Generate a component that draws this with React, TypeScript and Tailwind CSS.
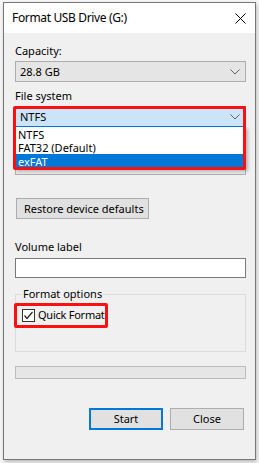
import React from "react";

const Chevron = () => (
  <svg width="10" height="6" viewBox="0 0 10 6" className="shrink-0">
    <path d="M0.5 0.5 L5 5 L9.5 0.5" fill="none" stroke="#606060" strokeWidth="1" />
  </svg>
);

const Combo = ({ text }: { text: string }) => (
  <div className="h-[21px] w-[231px] border border-[#adadad] bg-[#e5e5e5] flex items-center justify-between pl-[4px] pr-[5px] leading-[16px]">
    <span>{text}</span>
    <Chevron />
  </div>
);

export default function App() {
  return (
    <div
      className="w-[259px] h-[463px] bg-[#f7f7f7] pl-[3px] pt-[2px] text-[11px] text-black"
      style={{ fontFamily: '"Noto Sans", "Liberation Sans", sans-serif' }}
    >
      <div className="w-[253px] h-[458px] border border-[#777777] bg-[#f0f0f0] shadow-[1px_2px_4px_rgba(0,0,0,0.25)] flex flex-col">
        {/* Title bar */}
        <div className="h-[30px] bg-white flex items-center justify-between pl-[8px] pr-[9px] shrink-0">
          <span className="text-[12px] leading-[16px] tracking-[-0.35px]">Format USB Drive (G:)</span>
          <svg width="11" height="11" viewBox="0 0 11 11">
            <path d="M0.5 0.5 L10.5 10.5 M10.5 0.5 L0.5 10.5" stroke="#000" strokeWidth="1" />
          </svg>
        </div>

        <div className="pl-[11px] flex flex-col leading-[16px]">
          <div className="mt-[10px]">Capacity:</div>
          <div className="mt-[2px]">
            <Combo text="28.8 GB" />
          </div>

          <div className="mt-[6px]">File system</div>
          <div className="relative mt-[2px]">
            <div className="h-[21px] w-[231px] border border-[#0078d7] bg-[#cce4f7] flex items-center justify-between pl-[4px] pr-[5px]">
              <span>NTFS</span>
              <Chevron />
            </div>
            <div className="mt-[9px] h-[16px]" />
            <div className="mt-[2px]">
              <Combo text="" />
            </div>

            {/* Dropdown list overlay */}
            <div className="absolute left-0 top-[21px] w-[231px] bg-white border border-[#646464] border-t-0 shadow-[2px_2px_3px_rgba(0,0,0,0.25)] flex flex-col leading-none">
              <div className="h-[13px] pl-[2px] mt-[1px] flex items-center">NTFS</div>
              <div className="h-[13px] pl-[2px] flex items-center">FAT32 (Default)</div>
              <div className="h-[14px] pl-[2px] bg-[#0078d7] text-white flex items-center">exFAT</div>
            </div>
            {/* Red highlight */}
            <div className="absolute left-[-2px] top-[0px] w-[233px] h-[64px] border-[3px] border-[#ff1010] rounded-[2px] pointer-events-none" />
          </div>

          <button className="mt-[23px] ml-[1px] h-[21px] w-[133px] border border-[#adadad] bg-[#e1e1e1] text-left pl-[7px] leading-[16px] whitespace-nowrap">
            Restore device defaults
          </button>

          <div className="mt-[20px]">Volume label</div>
          <div className="mt-[3px] h-[20px] w-[231px] border border-[#7a7a7a] bg-white" />

          <fieldset className="mt-[8px] w-[231px] h-[66px] border border-[#dcdcdc] relative">
            <legend className="ml-[6px] px-[1px] leading-[16px]">Format options</legend>
            <div className="relative flex items-center mt-[5px] ml-[6px] h-[16px]">
              <div className="w-[13px] h-[13px] border border-[#333333] bg-white flex items-center justify-center">
                <svg width="11" height="11" viewBox="0 0 11 11">
                  <path d="M1.5 5.5 L4 8.5 L9.5 2" fill="none" stroke="#222" strokeWidth="1.2" />
                </svg>
              </div>
              <span className="ml-[3px] tracking-[-0.25px]">Quick Format</span>
              <div className="absolute left-[-8px] top-[-4px] w-[94px] h-[25px] border-[3px] border-[#ff1010] rounded-[2px]" />
            </div>
          </fieldset>

          <div className="mt-[14px] h-[13px] w-[231px] border border-[#bcbcbc] bg-[#e6e6e6]" />

          <div className="mt-[29px] flex gap-[7px] pl-[74px]">
            <button className="h-[22px] w-[74px] border-2 border-[#0078d7] bg-[#e1e1e1] leading-[16px]">Start</button>
            <button className="h-[22px] w-[74px] border border-[#adadad] bg-[#e1e1e1] leading-[16px]">Close</button>
          </div>
        </div>
      </div>
    </div>
  );
}
